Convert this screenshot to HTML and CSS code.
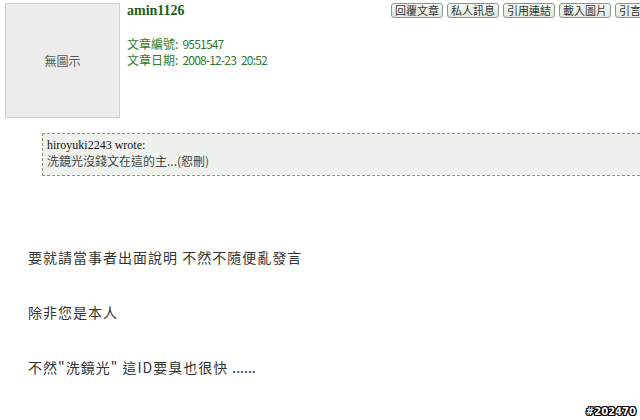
FILE: index.html
```html
<!DOCTYPE html>
<html lang="zh-Hant">
<head>
  <meta charset="UTF-8" />
  <title>文章</title>
  <link rel="stylesheet" href="styles.css">
</head>
<body>
  <div class="post-head">
    <div class="avatar">無圖示</div>
    <div class="info">
      <div class="author">amin1126</div>
      <div class="meta">文章編號<span class="num">: 9551547</span></div>
      <div class="meta">文章日期<span class="num">: 2008-12-23 20:52</span></div>
    </div>
    <div class="tools">
      <span class="btn">回覆文章</span>
      <span class="btn">私人訊息</span>
      <span class="btn">引用連結</span>
      <span class="btn">載入圖片</span>
      <span class="btn">引言回覆</span>
    </div>
  </div>

  <div class="quote">
    <div class="quote-who">hiroyuki2243 wrote:</div>
    <div class="quote-text">洗鏡光沒錢文在這的主...(恕刪)</div>
  </div>

  <div class="post-body">
    <p>要就請當事者出面說明 不然不隨便亂發言</p>
    <p>除非您是本人</p>
    <p>不然"洗鏡光" 這ID要臭也很快 <span class="dots">......</span></p>
  </div>

  <div class="stamp">#202470</div>
</body>
</html>
```

FILE: styles.css
```css
html, body {
  margin: 0;
  padding: 0;
  width: 640px;
  height: 420px;
  overflow: hidden;
  background: #fff;
}

body {
  position: relative;
  font-family: "Noto Sans CJK TC", "Liberation Sans", sans-serif;
  color: #333;
}

.post-head {
  display: flex;
  align-items: flex-start;
  padding: 3px 0 0 5px;
}

.avatar {
  flex: none;
  width: 113px;
  height: 113px;
  background: #ececec;
  border: 1px solid #cfcfcf;
  display: flex;
  align-items: center;
  justify-content: center;
  font-size: 12px;
  color: #555;
}

.info {
  flex: none;
  width: 264px;
  margin-left: 7px;
}

.author {
  font-family: "Liberation Serif", "Noto Sans CJK TC", serif;
  font-weight: bold;
  font-size: 14px;
  line-height: 16px;
  color: #1c5e1c;
  margin-bottom: 17px;
}

.meta {
  font-size: 12px;
  line-height: 16px;
  color: #2e7a2e;
}

.meta .num {
  letter-spacing: -0.8px;
  word-spacing: 3px;
}

.tools {
  flex: none;
  display: flex;
  gap: 4px;
  white-space: nowrap;
}

.btn {
  display: block;
  height: 13px;
  line-height: 13px;
  padding: 0 3px;
  font-size: 11px;
  color: #333;
  background: linear-gradient(#f4f8f2, #e2ebde);
  border: 1px solid #8c968a;
  border-radius: 3px;
}

.quote {
  margin: 15px -40px 0 42px;
  padding: 4px 4px 7px 4px;
  background: #eff2ec;
  border: 1px dashed #8a9a70;
  border-right: none;
  font-size: 12px;
  line-height: 15px;
}

.quote-who {
  font-family: "Liberation Serif", "Noto Sans CJK TC", serif;
  color: #111;
}

.quote-text {
  color: #444;
}

.post-body {
  padding: 72px 0 0 28px;
  font-size: 14px;
  line-height: 18px;
  letter-spacing: 1px;
  color: #333;
}

.post-body p {
  margin: 0 0 37px;
}

.post-body .dots {
  letter-spacing: 0;
}

.stamp {
  position: absolute;
  right: 4px;
  bottom: 3px;
  font-family: "DejaVu Sans", sans-serif;
  font-weight: bold;
  font-size: 10px;
  color: #fff;
  text-shadow: 1px 0 #000, -1px 0 #000, 0 1px #000, 0 -1px #000,
    1px 1px #000, -1px -1px #000, 1px -1px #000, -1px 1px #000;
}
```
